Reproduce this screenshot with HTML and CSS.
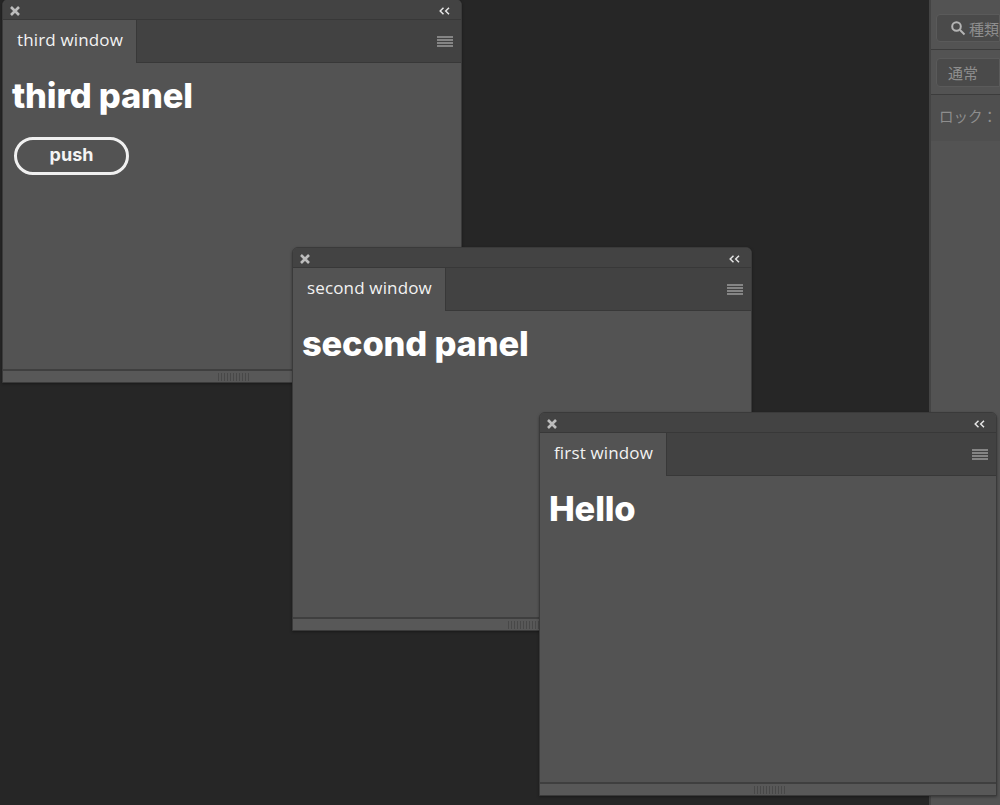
FILE: index.html
```html
<!DOCTYPE html>
<html lang="en">
<head>
<meta charset="utf-8">
<title>Windows</title>
<link rel="stylesheet" href="styles.css">
</head>
<body>
<main class="desktop">
  <aside class="side">
    <div class="side-row">
      <div class="side-field search">
        <svg class="search-icon" viewBox="0 0 16 16" width="16" height="16"><circle cx="6.5" cy="6.5" r="4.300"/><path d="M10 10l4.500 4.500"/></svg>
        <span>種類</span>
      </div>
    </div>
    <div class="side-row">
      <div class="side-field mode"><span>通常</span></div>
    </div>
    <div class="side-lock">ロック：</div>
  </aside>

  <section class="win win-third">
    <header class="titlebar">
      <svg class="close" viewBox="0 0 10 10" width="10" height="10"><path d="M1 1l8 8M9 1l-8 8"/></svg>
      <svg class="collapse" viewBox="0 0 11 8" width="11" height="8"><path d="M4.500 .8L1.200 4l3.300 3.200M10 .8L6.700 4 10 7.200"/></svg>
    </header>
    <nav class="tabs">
      <div class="tab">third window</div>
      <svg class="menu" viewBox="0 0 16 11" width="16" height="11"><path d="M0 1h16M0 4h16M0 7h16M0 10h16"/></svg>
    </nav>
    <div class="content">
      <h1>third panel</h1>
      <button class="push">push</button>
    </div>
    <footer class="foot"><span class="grip"></span></footer>
  </section>

  <section class="win win-second">
    <header class="titlebar">
      <svg class="close" viewBox="0 0 10 10" width="10" height="10"><path d="M1 1l8 8M9 1l-8 8"/></svg>
      <svg class="collapse" viewBox="0 0 11 8" width="11" height="8"><path d="M4.500 .8L1.200 4l3.300 3.200M10 .8L6.700 4 10 7.200"/></svg>
    </header>
    <nav class="tabs">
      <div class="tab">second window</div>
      <svg class="menu" viewBox="0 0 16 11" width="16" height="11"><path d="M0 1h16M0 4h16M0 7h16M0 10h16"/></svg>
    </nav>
    <div class="content">
      <h1>second panel</h1>
    </div>
    <footer class="foot"><span class="grip"></span></footer>
  </section>

  <section class="win win-first">
    <header class="titlebar">
      <svg class="close" viewBox="0 0 10 10" width="10" height="10"><path d="M1 1l8 8M9 1l-8 8"/></svg>
      <svg class="collapse" viewBox="0 0 11 8" width="11" height="8"><path d="M4.500 .8L1.200 4l3.300 3.200M10 .8L6.700 4 10 7.200"/></svg>
    </header>
    <nav class="tabs">
      <div class="tab">first window</div>
      <svg class="menu" viewBox="0 0 16 11" width="16" height="11"><path d="M0 1h16M0 4h16M0 7h16M0 10h16"/></svg>
    </nav>
    <div class="content">
      <h1>Hello</h1>
    </div>
    <footer class="foot"><span class="grip"></span></footer>
  </section>
</main>
</body>
</html>
```
FILE: styles.css
```css
* { box-sizing: border-box; }
html, body { margin: 0; height: 100%; }
body { background: #262626; overflow: hidden; font-family: "Inter", "Liberation Sans", sans-serif; }
.desktop { position: relative; width: 1000px; height: 805px; overflow: hidden; background: #262626; }

.side {
  position: absolute; left: 929px; top: 0; width: 71px; height: 805px;
  background: #535353; border-left: 2px solid #444;
  font-family: "Noto Sans CJK JP", sans-serif; color: #8e8e8e; font-size: 15px;
}
.side-row { height: 50px; padding: 14px 0 0 5px; border-bottom: 1px solid #3c3c3c; }
.side-row + .side-row { height: 45px; padding-top: 8px; }
.side-field {
  display: flex; align-items: center; gap: 3px; height: 29px; padding-left: 11px;
  background: #4a4a4a; border: 1px solid #5a5a5a; border-radius: 4px 0 0 4px;
}
.search { padding-left: 13px; height: 28px; }
.search-icon { fill: none; stroke: #b4b4b4; stroke-width: 2; flex: none; }
.side-lock { height: 46px; padding: 10px 0 0 8px; background: #4f4f4f; font-size: 14.500px; white-space: nowrap; }

.win {
  position: absolute; width: 460px; height: 384px; display: flex; flex-direction: column;
  background: #535353; border: 1px solid #3a3a3a; border-radius: 6px 6px 0 0;
  box-shadow: 0 1px 3px rgba(0,0,0,.35); overflow: hidden;
}
.win-third { left: 2px; top: -1px; }
.win-second { left: 292px; top: 247px; }
.win-first { left: 539px; top: 412px; width: 458px; }

.titlebar {
  flex: none; height: 20px; display: flex; align-items: center; justify-content: space-between;
  padding: 2px 11px 0 7px; background: #434343; border-bottom: 1px solid #383838;
}
.close { stroke: #bdbdbd; stroke-width: 2.600; fill: none; }
.collapse { stroke: #e4e4e4; stroke-width: 1.500; fill: none; }

.tabs {
  flex: none; height: 43px; display: flex; justify-content: space-between; align-items: center;
  padding-right: 8px; background: #424242; border-bottom: 1px solid #383838;
}
.tab {
  align-self: stretch; width: 134px; margin-bottom: -1px; padding: 8px 0 0 14px;
  background: #535353; border-right: 1px solid #383838;
  font-family: "Open Sans", "Noto Sans", sans-serif; font-size: 17px; line-height: 23px; letter-spacing: .15px; color: #f2f2f2; white-space: nowrap;
}
.win-second .tab { width: 153px; }
.win-first .tab { width: 127px; }
.menu { stroke: #c8c8c8; stroke-width: 1; fill: none; }

.content { flex: 1; padding: 11px 9px 0; color: #fff; }
h1 { margin: 0; font-size: 34.500px; line-height: 44px; font-weight: 800; letter-spacing: -.2px; color: #fff; white-space: nowrap; }
.push {
  display: block; margin: 19px 0 0 2px; width: 115px; height: 38px; padding: 0 0 3px; background: transparent;
  border: 3px solid #f0f0f0; border-radius: 19px; color: #f4f4f4;
  font-family: "Inter", "Liberation Sans", sans-serif; font-size: 18px; font-weight: 700;
}

.foot {
  flex: none; height: 13px; display: flex; justify-content: center; align-items: center;
  background: #585858; border-top: 2px solid #3f3f3f;
}
.grip {
  width: 31px; height: 8px; margin-left: 2px;
  background: repeating-linear-gradient(90deg, #484848 0 1px, transparent 1px 3px);
}
```
